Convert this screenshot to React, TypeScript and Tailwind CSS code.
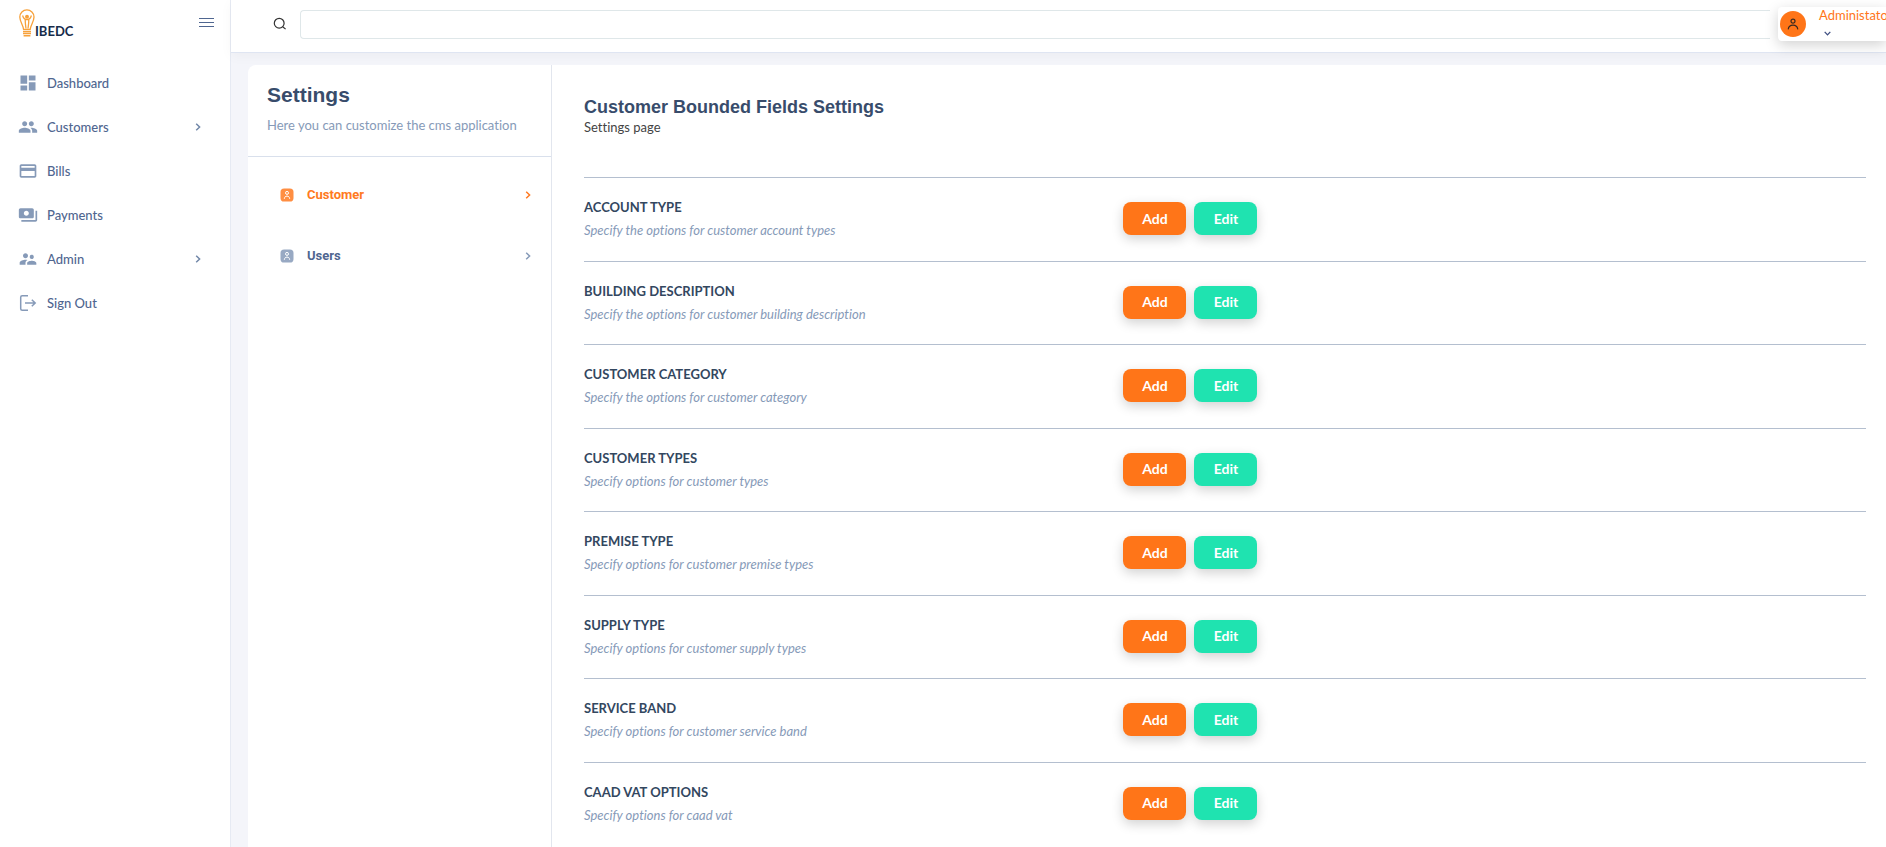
import { useState } from "react";
import type { ReactNode } from "react";
import { MdCreditCard, MdDashboard, MdPayments, MdPeople, MdSupervisorAccount } from "react-icons/md";

function Chevron({ className }: { className: string }) {
  return (
    <svg viewBox="0 0 8 8" className={className} fill="none" stroke="currentColor" strokeWidth="1.5" aria-hidden="true">
      <path d="M2.2 0.8 5.6 4 2.2 7.2" />
    </svg>
  );
}

function SignOutIcon() {
  return (
    <svg viewBox="0 0 20 20" className="size-5" fill="none" stroke="currentColor" strokeWidth="1.5" aria-hidden="true">
      <path d="M10 2.8H4.2Q2.7 2.8 2.7 4.3v11.4q0 1.5 1.5 1.5H10" />
      <path d="M7 10h10M13.8 6.7 17.2 10l-3.4 3.3" />
    </svg>
  );
}

function PersonBadge() {
  return (
    <svg viewBox="0 0 14 14" className="size-3.5" aria-hidden="true">
      <rect x="0.5" y="0.5" width="13" height="13" rx="3.6" fill="currentColor" opacity="0.85" />
      <g fill="none" stroke="#fff" strokeWidth="1">
        <circle cx="7" cy="4.9" r="1.5" />
        <path d="M4.3 10.8C4.5 8.9 5.6 8.1 7 8.1s2.5.8 2.7 2.7" />
      </g>
    </svg>
  );
}

function Logo() {
  return (
    <a href="#" aria-label="IBEDC" className="flex h-7 items-end text-[#172c4a]">
      <svg viewBox="0 0 16 28" className="h-7 w-4" fill="none" stroke="#f7a13a" strokeWidth="1.3" aria-hidden="true">
        <path d="M4.6 20.4C4.6 16.8.8 13 .8 8A7.1 7.1 0 0 1 15 8c0 5-3.8 8.800-3.8 12.4Z" />
        <circle cx="8" cy="7.8" r="1.3" fill="#f7a13a" />
        <path d="M3.6 6.5C4.5 9.5 6 10.7 8 10.7s3.5-1.2 4.4-4.2M6.2 10.5c0 4 .4 6 .8 9M9.8 10.5c0 4-.4 6-.8 9" />
        <path d="M4 22.4h8M4 24.6h8M4.6 26.8h6.8" strokeWidth="1.5" />
      </svg>
      <span className="text-[13px] leading-[12px] font-bold">IBEDC</span>
    </a>
  );
}

const nav: { label: string; icon: ReactNode; sub?: boolean }[] = [
  { label: "Dashboard", icon: <MdDashboard className="size-5" /> },
  { label: "Customers", icon: <MdPeople className="size-5" />, sub: true },
  { label: "Bills", icon: <MdCreditCard className="size-5" /> },
  { label: "Payments", icon: <MdPayments className="size-5" /> },
  { label: "Admin", icon: <MdSupervisorAccount className="size-5" />, sub: true },
  { label: "Sign Out", icon: <SignOutIcon /> },
];

const fields = [
  ["ACCOUNT TYPE", "Specify the options for customer account types"],
  ["BUILDING DESCRIPTION", "Specify the options for customer building description"],
  ["CUSTOMER CATEGORY", "Specify the options for customer category"],
  ["CUSTOMER TYPES", "Specify options for customer types"],
  ["PREMISE TYPE", "Specify options for customer premise types"],
  ["SUPPLY TYPE", "Specify options for customer supply types"],
  ["SERVICE BAND", "Specify options for customer service band"],
  ["CAAD VAT OPTIONS", "Specify options for caad vat"],
];

const actionClass =
  "h-[33px] w-[63px] rounded-lg text-[14px] leading-5 font-bold text-white shadow-[0_4px_12px_rgba(0,0,0,0.18)]";

export default function App() {
  const [active, setActive] = useState("Customer");
  return (
    <div className="flex h-screen overflow-hidden bg-[#f4f5fa] font-['Lato','Carlito',sans-serif] text-[13px] leading-5 text-[#444] [font-variant-ligatures:none]">
      <aside className="w-[231px] shrink-0 border-r border-[#e6eaf3] bg-white">
        <div className="flex items-start justify-between pt-[9px] pr-[15px] pl-[19px]">
          <Logo />
          <button type="button" aria-label="Toggle menu" className="mt-1 text-[#4f6690]">
            <svg viewBox="0 0 18 18" className="size-[18px]" stroke="currentColor" strokeWidth="1" aria-hidden="true">
              <path d="M2 5.500h15M2 9.500h15M2 13.500h15" />
            </svg>
          </button>
        </div>
        <nav className="mt-6">
          {nav.map((item) => (
            <a key={item.label} href="#" className="flex h-11 items-center pr-7 pl-[18px] font-medium text-[#506690]">
              <span className="text-[#869ab8]">{item.icon}</span>
              <span className="ml-[9px] flex-1">{item.label}</span>
              {item.sub && <Chevron className="size-2 text-[#7187a8]" />}
            </a>
          ))}
        </nav>
      </aside>

      <div className="flex min-w-0 flex-1 flex-col">
        <header className="flex h-[53px] shrink-0 items-start border-b border-[#dfe5f2] bg-white shadow-[0_3px_12px_rgba(0,0,0,0.04)]">
          <label htmlFor="search" aria-label="Search" className="mt-[17px] mr-[13px] ml-[42px] text-[#333]">
            <svg viewBox="0 0 14 14" className="size-3.5" fill="none" stroke="currentColor" strokeWidth="1.2" aria-hidden="true">
              <circle cx="6.2" cy="6.2" r="4.9" />
              <path d="m9.7 9.7 2.9 2.4" />
            </svg>
          </label>
          <input
            id="search"
            type="text"
            className="mt-2.5 mr-2 h-[29px] min-w-0 flex-1 rounded-l-sm border border-r-0 border-[#dfe7e9] bg-white px-3 outline-none"
          />
          <button
            type="button"
            className="mt-[7px] flex h-[34px] w-[108px] shrink-0 items-center rounded-l-sm bg-white pl-0.5 text-left shadow-[0_4px_14px_rgba(0,0,0,0.18)]"
          >
            <span className="flex size-[26px] shrink-0 items-center justify-center rounded-full bg-[#ff7518] text-[#3b2a20]">
              <svg viewBox="0 0 12 12" className="size-3" fill="none" stroke="currentColor" strokeWidth="1.2" aria-hidden="true">
                <circle cx="6" cy="3.2" r="2" />
                <path d="M1.2 11.3C1.6 8.5 3.500 7.2 6 7.2s4.4 1.3 4.8 4.1" />
              </svg>
            </span>
            <span className="ml-[13px] flex flex-col">
              <span className="leading-[18px] text-[#ff7518]">Administator</span>
              <span className="flex h-[18px] items-center pl-[5px] text-[#3f4f82]">
                <Chevron className="size-[7px] rotate-90" />
              </span>
            </span>
          </button>
        </header>

        <main className="mt-3 ml-[17px] flex min-h-0 flex-1 overflow-hidden rounded-tl-lg bg-white">
          <section className="w-[304px] shrink-0 border-r border-[#e2e6ee]">
            <div className="h-[92px] border-b border-[#d9e0ec] px-[19px] pt-[17px]">
              <h1 className="font-['Liberation_Sans',Arial,sans-serif] text-[21px] leading-[26px] font-bold text-[#384c6b]">
                Settings
              </h1>
              <p className="mt-[7px] text-[#869ab8]">Here you can customize the cms application</p>
            </div>
            <ul className="pt-[7px] font-['Roboto',sans-serif] text-[13px] font-bold">
              {["Customer", "Users"].map((label) => (
                <li key={label}>
                  <button
                    type="button"
                    onClick={() => setActive(label)}
                    className={`flex h-[61px] w-full items-center pr-[19px] pl-8 text-left ${active === label ? "text-[#ff7a21]" : "text-[#869ab8]"}`}
                  >
                    <PersonBadge />
                    <span className={`ml-[13px] flex-1 ${active === label ? "text-[#ff7a21]" : "text-[#506690]"}`}>{label}</span>
                    <Chevron className="size-2" />
                  </button>
                </li>
              ))}
            </ul>
          </section>

          <section className="min-w-0 flex-1 pt-[30px] pr-5 pl-8">
            <h2 className="font-['Liberation_Sans',Arial,sans-serif] text-[18px] leading-6 font-bold text-[#384c6b]">
              Customer Bounded Fields Settings
            </h2>
            <p className="-mt-0.5">Settings page</p>
            <div className="mt-10 grid min-h-[668px] auto-rows-fr">
              {fields.map(([title, text]) => (
                <div key={title} className="grid grid-cols-[42%_1fr] items-start border-t border-[#b4bfcf] pt-[19px]">
                  <div>
                    <h3 className="font-bold text-[#33475f]">{title}</h3>
                    <p className="mt-[3px] text-[#869ab8] italic">{text}</p>
                  </div>
                  <div className="mt-[5px] ml-px flex gap-2">
                    <button type="button" aria-label={`Add ${title}`} className={`${actionClass} bg-[#ff7518]`}>Add</button>
                    <button type="button" aria-label={`Edit ${title}`} className={`${actionClass} bg-[#1fe3b0]`}>Edit</button>
                  </div>
                </div>
              ))}
            </div>
          </section>
        </main>
      </div>
    </div>
  );
}
